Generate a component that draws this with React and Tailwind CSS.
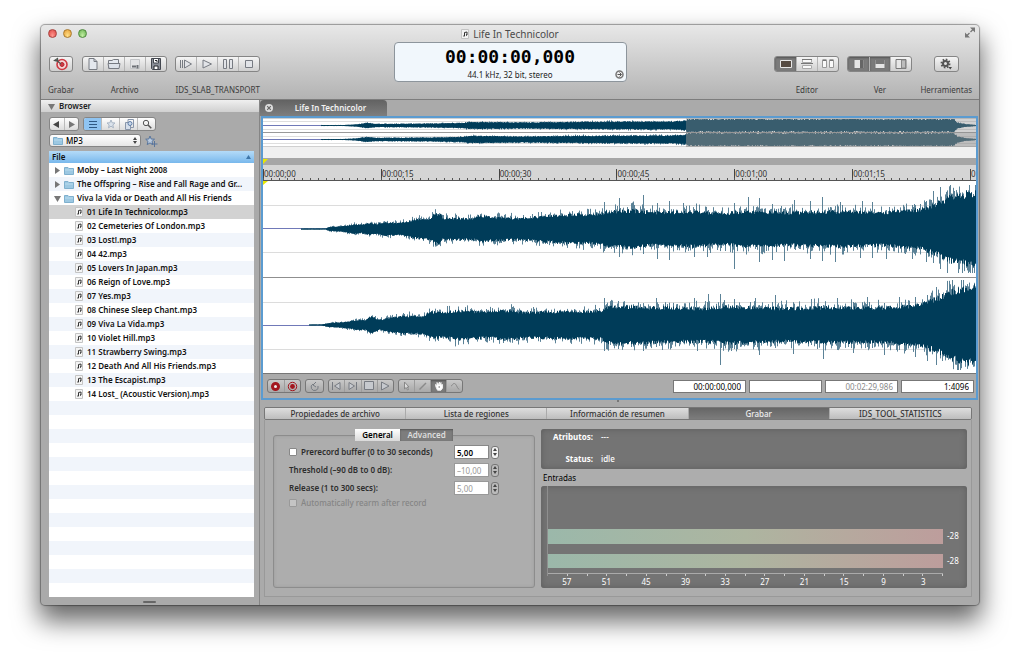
import React, { useState } from 'react';

const FOLDERS = [
    { name: 'Moby – Last Night 2008', open: false },
    { name: 'The Offspring – Rise and Fall Rage and Gr...', open: false },
    { name: 'Viva la Vida or Death and All His Friends', open: true },
];

const TRACKS = [
    '01 Life In Technicolor.mp3',
    '02 Cemeteries Of London.mp3',
    '03 Lost!.mp3',
    '04 42.mp3',
    '05 Lovers In Japan.mp3',
    '06 Reign of Love.mp3',
    '07 Yes.mp3',
    '08 Chinese Sleep Chant.mp3',
    '09 Viva La Vida.mp3',
    '10 Violet Hill.mp3',
    '11 Strawberry Swing.mp3',
    '12 Death And All His Friends.mp3',
    '13 The Escapist.mp3',
    '14 Lost_ (Acoustic Version).mp3',
];

const TIMES = ['00:00;00', '00:00;15', '00:00;30', '00:00;45', '00:01;00', '00:01;15'];
const DB_MARKS = [57, 51, 45, 39, 33, 27, 21, 15, 9, 3];
const PANEL_TABS = ['Propiedades de archivo', 'Lista de regiones', 'Información de resumen', 'Grabar', 'IDS_TOOL_STATISTICS'];

/* ---------- waveform helpers ---------- */

const WIDTH = 713;

const random = (seed) => {
    let s = seed;
    return () => {
        s = (s * 1664525 + 1013904223) % 4294967296;
        return s / 4294967296;
    };
};

// Linear interpolation between [x, height] points
const heightAt = (points, x) => {
    for (let i = 1; i < points.length; i++) {
        const [x0, h0] = points[i - 1];
        const [x1, h1] = points[i];
        if (x <= x1) return h0 + ((h1 - h0) * (x - x0)) / (x1 - x0);
    }
    return points[points.length - 1][1];
};

// Returns the solid body and the thin lighter peaks as two path strings
const buildWave = ({ points, spikes = {}, center, seed, peak, max }) => {
    const rnd = random(seed);
    let body = '';
    let peaks = '';
    for (let x = 0; x < WIDTH; x++) {
        const h = heightAt(points, x);
        if (h < 0.4) continue;
        const up = Math.min(max, h * (0.84 + rnd() * 0.22));
        const down = Math.min(max, h * (0.84 + rnd() * 0.22));
        const extra = (peak * h) / 20;
        const [spikeUp, spikeDown] = spikes[x] || [0, 0];
        const top = Math.min(max, Math.max(spikeUp, up + rnd() ** 3 * extra));
        const bottom = Math.min(max, Math.max(spikeDown, down + rnd() ** 3 * extra));
        body += `M${x + 0.5} ${(center - up).toFixed(1)}V${(center + down).toFixed(1)}`;
        peaks += `M${x + 0.5} ${(center - top).toFixed(1)}V${(center + bottom).toFixed(1)}`;
    }
    return { body, peaks };
};

const LEFT = buildWave({
    points: [[0, 0], [36, 0], [38, 0.6], [62, 0.6], [66, 2], [80, 3], [92, 5], [97, 4], [106, 6], [114, 5], [120, 7], [135, 6], [150, 9], [160, 10], [168, 11], [170, 15], [177, 15], [179, 11], [212, 11], [217, 14], [226, 12], [255, 11], [280, 13], [310, 15], [338, 15], [342, 18], [370, 19], [390, 17], [430, 18], [460, 16], [480, 18], [530, 17], [580, 18], [620, 17], [655, 20], [668, 24], [680, 29], [690, 34], [713, 38]],
    spikes: { 341: [27, 22], 356: [31, 28], 380: [34, 25], 394: [26, 30], 406: [28, 31], 420: [26, 18], 431: [20, 28], 444: [18, 28], 471: [26, 40], 485: [32, 18], 496: [31, 33], 509: [25, 31], 521: [20, 32], 531: [29, 20], 547: [28, 30], 559: [32, 32], 572: [20, 33], 577: [27, 20], 597: [18, 29], 599: [28, 18], 609: [27, 29], 623: [19, 30], 649: [24, 30], 663: [28, 33], 670: [38, 34], 677: [42, 40] },
    center: 48, seed: 7, peak: 9, max: 44,
});

const RIGHT = buildWave({
    points: [[0, 0], [44, 0], [46, 0.6], [58, 0.6], [66, 2], [80, 3], [95, 5], [102, 5], [108, 9], [116, 5], [125, 7], [140, 9], [160, 9], [166, 13], [180, 13], [200, 15], [222, 13], [242, 15], [265, 13], [300, 14], [338, 14], [342, 18], [360, 19], [400, 18], [440, 17], [470, 19], [520, 17], [560, 18], [620, 18], [650, 20], [668, 25], [680, 30], [690, 35], [713, 40]],
    spikes: { 341: [27, 26], 355: [24, 24], 380: [20, 26], 393: [27, 22], 431: [27, 18], 434: [18, 26], 445: [31, 20], 457: [31, 40], 471: [26, 24], 492: [27, 20], 496: [20, 30], 512: [30, 22], 530: [22, 29], 548: [26, 20], 560: [20, 34], 574: [27, 25], 590: [23, 28], 604: [28, 22], 621: [22, 30], 636: [28, 25], 652: [28, 32], 664: [30, 36], 673: [38, 40] },
    center: 144, seed: 31, peak: 9, max: 45,
});

const overviewPoints = [[0, 0], [56, 0], [58, 0.5], [80, 0.5], [92, 1], [104, 2.6], [112, 1.6], [150, 1.8], [170, 2], [200, 2.6], [206, 3.6], [260, 3], [310, 3.6], [380, 4], [408, 4], [422, 4.8], [424, 6.4], [690, 6.4], [694, 3], [702, 1.4], [712, 0.6]];
const OVER_LEFT = buildWave({ points: overviewPoints, center: 7.5, seed: 3, peak: 7, max: 6.5 });
const OVER_RIGHT = buildWave({ points: overviewPoints, center: 21.5, seed: 11, peak: 7, max: 6.5 });

const Overview = () => (
    <svg viewBox="0 0 713 40" preserveAspectRatio="none" className="block h-10 w-full bg-white">
        <rect y="29" width="713" height="11" fill="#f0f0f0" />
        <path d="M0 3.5H713M0 11.5H713M0 18.5H713M0 25.5H713" stroke="#dedede" />
        <path d="M0 14.5H713" stroke="#999" />
        <path d="M0 0.5H713M0 28.5H713" stroke="#d0d0d0" />
        <path d="M0 7.5H713M0 21.5H713" stroke="#7079b8" />
        {[OVER_LEFT, OVER_RIGHT].map((wave, i) => (
            <g key={i} fill="none">
                <path d={wave.peaks} stroke="#5b8297" />
                <path d={wave.body} stroke="#003c59" />
            </g>
        ))}
        <rect x="423" width="290" height="29" fill="#8f8f8f" fillOpacity="0.4" />
        <rect x="423" y="15" width="290" height="14" fill="#8f8f8f" fillOpacity="0.3" />
    </svg>
);

const Waveform = () => (
    <svg viewBox="0 0 713 192" preserveAspectRatio="none" className="block h-48 w-full bg-white">
        <path d="M0 24.5H713M0 71.5H713M0 121.5H713M0 168.5H713" stroke="#dcdcdc" />
        <path d="M0 96.5H713" stroke="#8f8f8f" />
        <path d="M0 47.5H713M0 144.5H713" stroke="#7079b8" />
        {[LEFT, RIGHT].map((wave, i) => (
            <g key={i} fill="none">
                <path d={wave.peaks} stroke="#5b8297" />
                <path d={wave.body} stroke="#003c59" />
            </g>
        ))}
        <path d="M0 0H5L0 4Z" fill="#e8e800" />
    </svg>
);

/* ---------- icons ---------- */

const Icon = ({ w = 12, h = 12, className = '', children }) => (
    <svg width={w} height={h} viewBox={`0 0 ${w} ${h}`} fill="none" stroke="#777b82" className={`shrink-0 ${className}`}>
        {children}
    </svg>
);

const RecordTarget = () => (
    <Icon w={16} h={14}>
        <circle cx="9" cy="7.5" r="5" fill="#f3d7d7" stroke="#cf3a44" strokeWidth="1.6" />
        <circle cx="9" cy="7.5" r="2" fill="#cf3a44" stroke="#b52630" />
        <path d="M3 3L8 7M1.5 3.5L4.5 1.5L5 4.5Z" stroke="#4f5550" strokeWidth="1.2" />
    </Icon>
);

const NewFile = () => (
    <Icon>
        <path d="M2 .5H7L10 3.5V11.5H2Z" fill="#e4e8ee" />
        <path d="M7 .5V3.5H10" />
    </Icon>
);

const OpenFile = () => (
    <Icon w={14}>
        <path d="M1.5 10.5V2.5H5L6.5 1.5H11.5V5" fill="#e4e8ee" />
        <path d="M1 5.5H13L12 10.5H2Z" fill="#dde2e9" />
    </Icon>
);

const SaveFile = () => (
    <Icon>
        <path d="M1.5 1.5H10.5V10.5H1.5Z" fill="#e2e3e5" stroke="#c2c4c7" />
        <path d="M3 8.5H7M8.5 7V10.5" stroke="#6c7076" strokeWidth="2" />
    </Icon>
);

const SaveAs = () => (
    <Icon>
        <path d="M1.5 .5H10.5V11.5H2.5L1.5 10.5Z" fill="#8a8f98" stroke="#43474f" />
        <path d="M3.5 1V5H8.5V1" fill="#fff" stroke="#43474f" />
        <path d="M4 11V8H8V11" fill="#fff" stroke="#22252b" />
        <path d="M5 2.5H7V4" stroke="#22252b" />
    </Icon>
);

const PlayFrom = () => (
    <Icon w={14}>
        <path d="M1.5 2V10M3.5 2V10M5.5 2L12.5 6L5.5 10Z" fill="#e2e4e8" />
    </Icon>
);

const Play = () => (
    <Icon>
        <path d="M2 2L10.5 6L2 10Z" fill="#e2e4e8" />
    </Icon>
);

const Pause = () => (
    <Icon>
        <path d="M1.5 1.5H4.5V10.5H1.5ZM7.5 1.5H10.5V10.5H7.5Z" fill="#e2e4e8" />
    </Icon>
);

const Stop = () => (
    <Icon>
        <path d="M2.5 2.5H9.5V9.5H2.5Z" fill="#e2e4e8" />
    </Icon>
);

const SinglePane = () => (
    <Icon>
        <path d="M.5 2.5H11.5V9.5H.5Z" fill="#564b42" stroke="#e8e8e8" />
    </Icon>
);

const RowsPane = () => (
    <Icon>
        <path d="M1.5 1.5H10.5V4.5H1.5ZM1.5 7.5H10.5V10.5H1.5Z" fill="#fafafa" stroke="#aaa" />
        <path d="M1 1.5H11M0 5.5H12" stroke="#777" />
    </Icon>
);

const ColsPane = () => (
    <Icon>
        <path d="M.5 2.5H4.5V9.5H.5ZM7.5 2.5H11.5V9.5H7.5Z" fill="#fafafa" stroke="#999" />
        <path d="M.5 2H4.5M7.5 2H11.5" stroke="#555" />
    </Icon>
);

const SidePane = ({ side }) => (
    <Icon>
        <path d="M1 1.5H11V10.5H1Z" fill="#e6e6e6" stroke="#777" />
        {side === 'left' && <path d="M7 2H10.5V10H7Z" fill="#666" stroke="none" />}
        {side === 'top' && <path d="M1.5 2H10.5V6H1.5Z" fill="#777" stroke="none" />}
        {side === 'right' && <path d="M6.5 2H10.5V10H6.5Z" fill="#bcbcbc" stroke="#888" />}
    </Icon>
);

const Gear = () => (
    <Icon w={14}>
        <circle cx="6.5" cy="5.5" r="4" stroke="#555" strokeWidth="2" strokeDasharray="1.6 1.5" />
        <circle cx="6.5" cy="5.5" r="2.5" stroke="#555" strokeWidth="2" />
        <path d="M9.5 9H13L11.2 11.5Z" fill="#444" stroke="none" />
    </Icon>
);

const FolderIcon = () => (
    <Icon w={10} h={9}>
        <path d="M.5 1.5H4L5 2.5H9.5V8.5H.5Z" fill="#9cc8e2" stroke="#7fb0ce" />
        <path d="M1 4H9" stroke="#b9dcee" />
    </Icon>
);

const NoteIcon = () => (
    <Icon w={8} h={10}>
        <path d="M.5 .5H7.5V9.5H.5Z" fill="#f4f4f4" stroke="#c4c4c4" />
        <path d="M3.5 7V3.5L6 3V6" stroke="#333" />
        <path d="M2.5 7H3.5M5 6H6" stroke="#333" strokeWidth="1.4" />
    </Icon>
);

const Disclosure = ({ open }) => (
    <Icon w={7} h={7}>
        <path d={open ? 'M0 1H7L3.5 7Z' : 'M1 0L6 3.5L1 7Z'} fill="#777" stroke="none" />
    </Icon>
);

/* ---------- shared controls ---------- */

const Segmented = ({ items, on = [], size = 'big' }) => (
    <div className={`flex divide-x overflow-hidden rounded-[3px] border ${size === 'big' ? 'h-4 divide-[#b4b4b4] border-[#858585] bg-linear-to-b from-[#f5f5f5] to-[#cfcfcf]' : 'h-[14px] divide-[#9c9c9c] border-[#777] bg-linear-to-b from-[#c9c9c9] to-[#a8a8a8]'}`}>
        {items.map(([label, icon], i) => (
            <button
                key={label}
                aria-label={label}
                className={`flex flex-1 items-center justify-center ${on.includes(i) ? 'bg-[#7b7b7b] shadow-[inset_0_1px_2px_#555]' : ''}`}
            >
                {icon}
            </button>
        ))}
    </div>
);

const ToolGroup = ({ label, width, children }) => (
    <div className="flex flex-col items-center gap-3">
        <div className={width}>{children}</div>
        <span className="leading-3 text-[#3c3c3c]">{label}</span>
    </div>
);

const Stepper = ({ label, muted }) => (
    <span className={`flex h-[13px] w-2 flex-col overflow-hidden rounded-[3px] border border-[#777] ${muted ? 'bg-[#bbb]' : 'bg-[#f2f2f2]'}`}>
        <button aria-label={`${label} +`} className="flex flex-1 items-center justify-center">
            <Icon w={4} h={3}><path d="M0 3L2 0L4 3Z" fill="#444" stroke="none" /></Icon>
        </button>
        <button aria-label={`${label} -`} className="flex flex-1 items-center justify-center">
            <Icon w={4} h={3}><path d="M0 0L2 3L4 0Z" fill="#444" stroke="none" /></Icon>
        </button>
    </span>
);

/* ---------- window header ---------- */

const Header = () => (
    <header className="grid h-[75px] grid-cols-[1fr_auto_1fr] rounded-t-[4px] border-b border-[#7d7d7d] bg-linear-to-b from-[#e8e8e8] to-[#b3b3b3]">
        <div className="pt-1 pl-[7px]">
            <div className="flex h-[9px] gap-[6px]">
                <button aria-label="Cerrar" className="size-[9px] rounded-full border border-[#a8433f] bg-radial-[at_50%_80%] from-[#ff9a92] to-[#dc3f3c]" />
                <button aria-label="Minimizar" className="size-[9px] rounded-full border border-[#a87a2e] bg-radial-[at_50%_80%] from-[#ffe08a] to-[#e59a30]" />
                <button aria-label="Ampliar" className="size-[9px] rounded-full border border-[#4f8a3e] bg-radial-[at_50%_80%] from-[#c4f0a4] to-[#63ae4c]" />
            </div>
            <div className="mt-[18px] flex gap-2">
                <ToolGroup label="Grabar" width="w-6">
                    <Segmented items={[['Grabar', <RecordTarget />]]} />
                </ToolGroup>
                <ToolGroup label="Archivo" width="w-[85px]">
                    <Segmented items={[['Nuevo', <NewFile />], ['Abrir', <OpenFile />], ['Guardar', <SaveFile />], ['Guardar como', <SaveAs />]]} />
                </ToolGroup>
                <ToolGroup label="IDS_SLAB_TRANSPORT" width="w-[85px]">
                    <Segmented items={[['Reproducir desde', <PlayFrom />], ['Reproducir', <Play />], ['Pausa', <Pause />], ['Detener', <Stop />]]} />
                </ToolGroup>
            </div>
        </div>

        <div className="flex w-[233px] flex-col items-center pt-[2px]">
            <h1 className="flex h-[14px] items-center gap-1 text-[10px] text-[#4a4a4a]">
                <NoteIcon />
                Life In Technicolor
            </h1>
            <div className="relative mt-px flex h-10 w-full flex-col items-center rounded-[4px] border border-[#8d959c] bg-[#f1f7fc]">
                <span className="mt-1 font-['DejaVu_Sans_Mono',monospace] text-[18px] leading-5 font-bold text-black">00:00:00,000</span>
                <span className="mt-[2px] leading-3 text-[#222]">44.1 kHz, 32 bit, stereo</span>
                <button aria-label="Cambiar formato" className="absolute right-[2px] bottom-[2px]">
                    <Icon w={9} h={9}>
                        <circle cx="4.5" cy="4.5" r="3.5" fill="#eee" stroke="#777" strokeWidth="1.5" />
                        <path d="M2.5 4.5H6M4.5 2.5L6.5 4.5L4.5 6.5" stroke="#555" />
                    </Icon>
                </button>
            </div>
        </div>

        <div className="flex flex-col items-end pt-[2px]">
            <button aria-label="Pantalla completa" className="mr-1">
                <Icon w={10} h={11}>
                    <path d="M5.5 5L9 1.5M4.5 6L1 9.5" stroke="#777" strokeWidth="1.3" />
                    <path d="M5 .5H10V5.5ZM0 5.5V10.5H5Z" fill="#777" stroke="none" />
                </Icon>
            </button>
            <div className="mt-[18px] flex gap-2 pr-[7px]">
                <ToolGroup label="Editor" width="w-[65px]">
                    <Segmented on={[0]} items={[['Un panel', <SinglePane />], ['Filas', <RowsPane />], ['Columnas', <ColsPane />]]} />
                </ToolGroup>
                <ToolGroup label="Ver" width="w-[65px]">
                    <Segmented on={[0, 1]} items={[['Izquierda', <SidePane side="left" />], ['Arriba', <SidePane side="top" />], ['Derecha', <SidePane side="right" />]]} />
                </ToolGroup>
                <ToolGroup label="Herramientas" width="w-[25px]">
                    <Segmented items={[['Herramientas', <Gear />]]} />
                </ToolGroup>
            </div>
        </div>
    </header>
);

/* ---------- file browser ---------- */

const Browser = () => {
    const [selected, setSelected] = useState(TRACKS[0]);

    return (
        <aside className="flex w-[219px] shrink-0 flex-col border-r border-[#858585]">
            <h2 className="flex h-3 items-center gap-1 bg-linear-to-b from-[#f0f0f0] to-[#d0d0d0] pl-[7px] font-semibold text-[#222]">
                <Disclosure open />
                Browser
            </h2>
            <div className="flex flex-1 flex-col pt-[5px] pr-[5px] pb-2 pl-2">
                <div className="flex h-[14px] gap-1">
                    <div className="flex w-[30px] divide-x divide-[#bbb] rounded-[3px] border border-[#858585] bg-linear-to-b from-white to-[#dcdcdc]">
                        <button aria-label="Atrás" className="flex flex-1 items-center justify-center">
                            <Icon w={7} h={7}><path d="M6 0V7L0 3.5Z" fill="#444" stroke="none" /></Icon>
                        </button>
                        <button aria-label="Adelante" className="flex flex-1 items-center justify-center">
                            <Icon w={7} h={7}><path d="M1 0V7L7 3.5Z" fill="#777" stroke="none" /></Icon>
                        </button>
                    </div>
                    <div className="flex w-[73px] divide-x divide-[#bbb] overflow-hidden rounded-[3px] border border-[#858585] bg-linear-to-b from-white to-[#dcdcdc]">
                        <button aria-label="Lista" className="flex flex-1 items-center justify-center bg-[#8fc4f2]">
                            <Icon w={10} h={9}><path d="M1 1.5H9M1 4.5H9M1 7.5H9" stroke="#2f5a85" /></Icon>
                        </button>
                        <button aria-label="Favoritos" className="flex flex-1 items-center justify-center">
                            <Icon w={10} h={10}><path d="M5 1L6.2 3.8L9 4L6.8 5.9L7.5 8.8L5 7.2L2.5 8.8L3.2 5.9L1 4L3.8 3.8Z" fill="#dbe3ec" stroke="#a9b5c4" /></Icon>
                        </button>
                        <button aria-label="Recientes" className="flex flex-1 items-center justify-center">
                            <Icon w={10} h={11}>
                                <path d="M1.5 3.5H6.5V10.5H1.5Z" fill="#d5deea" stroke="#8996aa" />
                                <path d="M4 3V.5H9.5V8.5H7" stroke="#8996aa" />
                                <circle cx="6" cy="4.5" r="2" fill="#c9d8ea" stroke="#627fa8" />
                            </Icon>
                        </button>
                        <button aria-label="Buscar" className="flex flex-1 items-center justify-center">
                            <Icon w={10} h={10}>
                                <circle cx="4" cy="4" r="2.7" stroke="#555" />
                                <path d="M6 6L9.3 9.3" stroke="#555" strokeWidth="1.5" />
                            </Icon>
                        </button>
                    </div>
                </div>

                <div className="mt-[3px] flex items-center gap-1">
                    <div className="relative w-[92px]">
                        <select aria-label="Carpeta" className="block h-[13px] w-full appearance-none rounded-[3px] border border-[#858585] bg-linear-to-b from-white to-[#e6e6e6] pl-4 leading-[11px] font-medium text-black">
                            <option>MP3</option>
                        </select>
                        <span className="pointer-events-none absolute inset-y-0 left-1 flex items-center"><FolderIcon /></span>
                        <span className="pointer-events-none absolute inset-y-0 right-1 flex items-center">
                            <Icon w={4} h={7}><path d="M0 3L2 0L4 3ZM0 4L2 7L4 4Z" fill="#444" stroke="none" /></Icon>
                        </span>
                    </div>
                    <button aria-label="Añadir a favoritos">
                        <Icon w={13} h={12}>
                            <path d="M5 1L6.2 4L9.5 4.2L7 6.4L7.8 9.6L5 7.9L2.2 9.6L3 6.4L.7 4.2L3.8 4Z" fill="#b9cadf" stroke="#58759c" />
                            <path d="M9.5 6V12M6.5 9H12.5" stroke="#58759c" />
                        </Icon>
                    </button>
                </div>

                <div className="mt-1 flex-1 bg-[repeating-linear-gradient(#fff_0_14px,#f1f5fb_14px_28px)] bg-[position:0_12px] bg-white">
                    <table className="w-full table-fixed border-collapse text-[#111]">
                        <thead>
                            <tr className="h-3 bg-linear-to-b from-[#b4dbf8] to-[#78b8ec]">
                                <th className="p-0 text-left font-semibold">
                                    <button className="flex h-3 w-full items-center justify-between px-[3px]">
                                        File
                                        <Icon w={5} h={4}><path d="M0 4L2.5 0L5 4Z" fill="#3f76a8" stroke="none" /></Icon>
                                    </button>
                                </th>
                            </tr>
                        </thead>
                        <tbody className="font-semibold">
                            {FOLDERS.map((folder) => (
                                <tr key={folder.name}>
                                    <td className="h-[14px] p-0">
                                        <button className="flex h-[14px] w-full items-center gap-[3px] pl-[5px] whitespace-nowrap">
                                            <Disclosure open={folder.open} />
                                            <FolderIcon />
                                            <span>{folder.name}</span>
                                        </button>
                                    </td>
                                </tr>
                            ))}
                            {TRACKS.map((track) => (
                                <tr key={track} className={track === selected ? 'bg-[#d2d2d2]' : ''}>
                                    <td className="h-[14px] p-0">
                                        <button onClick={() => setSelected(track)} className="flex h-[14px] w-full items-center gap-1 pl-[26px] whitespace-nowrap">
                                            <NoteIcon />
                                            <span>{track}</span>
                                        </button>
                                    </td>
                                </tr>
                            ))}
                        </tbody>
                    </table>
                </div>
            </div>
            <i className="-mt-1 mb-[2px] ml-[102px] h-[2px] w-[13px] rounded-full bg-[#666]" />
        </aside>
    );
};

/* ---------- editor ---------- */

const Ruler = () => (
    <div className="flex h-4 border-b border-[#555] bg-[#d5d5d5]">
        {TIMES.map((time) => (
            <div key={time} className="flex flex-1 flex-col justify-end">
                <span className="border-l border-[#444] leading-[9px] text-[#333]">{time}</span>
                <div className="flex h-[2px]">
                    {Array.from({ length: 15 }, (_, i) => (
                        <i key={i} className="flex-1 border-l border-[#555]" />
                    ))}
                </div>
            </div>
        ))}
        <div className="flex w-[6px] flex-col justify-end">
            <span className="border-l border-[#444] leading-[9px] text-[#333]">0</span>
            <i className="h-[2px] border-l border-[#555]" />
        </div>
    </div>
);

const READOUTS = [
    ['Posición', '00:00:00,000', 'text-black'],
    ['Selección', '', 'text-black'],
    ['Duración', '00:02:29,986', 'text-[#8a8a8a]'],
    ['Zoom', '1:4096', 'text-black'],
];

const EditorBar = () => (
    <div className="flex h-[25px] items-center gap-1 border-t border-[#777] bg-[#ababab] pr-[2px] pl-1">
        <div className="w-[34px]">
            <Segmented
                size="small"
                items={[
                    ['Grabar', <Icon w={11} h={11}><circle cx="5.5" cy="5.5" r="3" fill="#eee" stroke="#a3161e" strokeWidth="3" /></Icon>],
                    ['Grabar región', <Icon w={11} h={11}><circle cx="5.5" cy="5.5" r="4.2" stroke="#a3161e" /><circle cx="5.5" cy="5.5" r="2.4" fill="#a3161e" stroke="none" /></Icon>],
                ]}
            />
        </div>
        <div className="w-[19px]">
            <Segmented size="small" items={[['Bucle', <Icon w={10} h={10}><path d="M6 1L3 4L6 6M3 3A3.5 3.5 0 1 0 8 5" stroke="#767b82" /></Icon>]]} />
        </div>
        <div className="w-[66px]">
            <Segmented
                size="small"
                items={[
                    ['Inicio', <Icon w={11} h={10}><path d="M1.5 1V9M9 1.5V8.5L3.5 5Z" fill="#c6c9ce" /></Icon>],
                    ['Fin', <Icon w={11} h={10}><path d="M9.5 1V9M2 1.5V8.5L7.5 5Z" fill="#c6c9ce" /></Icon>],
                    ['Detener', <Icon w={10} h={10}><path d="M.5 .5H9.5V8.5H.5Z" fill="#c6c9ce" /></Icon>],
                    ['Reproducir', <Icon w={10} h={10}><path d="M1.5 1V9L9 5Z" fill="#c6c9ce" /></Icon>],
                ]}
            />
        </div>
        <div className="w-[65px]">
            <Segmented
                size="small"
                on={[2]}
                items={[
                    ['Selección', <Icon w={9} h={10}><path d="M2.5 1V8L4.2 6.5L5.5 9L6.5 8.5L5.3 6H7Z" fill="#ddd" stroke="#888" /></Icon>],
                    ['Lápiz', <Icon w={9} h={10}><path d="M1.5 8.5L8 2" stroke="#8a8a8a" strokeWidth="1.5" /></Icon>],
                    ['Mano', <Icon w={10} h={10}><path d="M2 6L1.5 3.5L3 4.5V1.5L4.5 3.5L5.5 1V3.5L7 1.5V4L8.5 3.5V7L7 9.2H3.5Z" fill="#fff" stroke="#eee" /><path d="M4.5 6H6" stroke="#666" /></Icon>],
                    ['Curva', <Icon w={10} h={10}><path d="M1 5C2.5 5 2.5 2 4.5 2.5C6.5 3 6.5 6 9 8.5" stroke="#888" /></Icon>],
                ]}
            />
        </div>
        <div className="ml-auto flex gap-[3px]">
            {READOUTS.map(([label, value, color]) => (
                <input key={label} aria-label={label} defaultValue={value} className={`h-[13px] w-[73px] border border-[#777] bg-white px-1 text-right ${color}`} />
            ))}
        </div>
    </div>
);

const Editor = () => (
    <div>
        <div className="flex h-4 items-start bg-[#aaa]">
            <div className="flex h-4 w-[127px] items-center rounded-t-[4px] bg-linear-to-b from-[#626262] to-[#7e7e7e] pl-1">
                <button aria-label="Cerrar pestaña">
                    <Icon w={10} h={10}>
                        <circle cx="5" cy="5" r="4" fill="#ddd" stroke="none" />
                        <path d="M3.2 3.2L6.8 6.8M6.8 3.2L3.2 6.8" stroke="#666" strokeWidth="1.2" />
                    </Icon>
                </button>
                <span className="flex-1 text-center font-semibold text-[#f2f2f2]">Life In Technicolor</span>
            </div>
        </div>
        <div className="mx-px border-2 border-[#5b9bd0]">
            <Overview />
            <div className="h-[7px] bg-[#a6a6a6]">
                <Icon w={5} h={6} className="block"><path d="M0 1H5L0 6Z" fill="#e8e800" stroke="none" /></Icon>
            </div>
            <Ruler />
            <Waveform />
            <EditorBar />
        </div>
    </div>
);

/* ---------- bottom panel ---------- */

const RecordOptions = () => {
    const [tab, setTab] = useState('Advanced');

    return (
        <fieldset className="min-w-0 rounded-[3px] border border-[#8c8c8c] px-[15px] pb-2 shadow-[inset_0_0_3px_#999]">
            <legend className="mx-auto flex h-3 w-[98px]">
                {['General', 'Advanced'].map((name) => (
                    <button
                        key={name}
                        onClick={() => setTab(name)}
                        className={`flex-auto leading-3 font-semibold ${name === tab ? 'bg-[#7d7d7d] text-[#ddd] shadow-[inset_0_1px_2px_#555]' : 'bg-linear-to-b from-white to-[#dadada] text-black'}`}
                    >
                        {name}
                    </button>
                ))}
            </legend>
            <div className="mt-1 grid grid-cols-[163px_35px_auto] items-center justify-start gap-x-[2px] gap-y-1 font-semibold text-[#2c2c2c]">
                <label className="flex items-center gap-1 whitespace-nowrap">
                    <input type="checkbox" className="size-2 appearance-none rounded-[1px] border border-[#888] bg-white checked:bg-[#3b78b8]" />
                    Prerecord buffer (0 to 30 seconds)
                </label>
                <input aria-label="Prerecord buffer" defaultValue="5,00" className="h-[14px] w-full border border-[#888] bg-white px-[2px] text-black" />
                <Stepper label="Prerecord buffer" />

                <label htmlFor="threshold">Threshold (–90 dB to 0 dB):</label>
                <input id="threshold" disabled defaultValue="–10,00" className="h-[14px] w-full border border-[#999] bg-white px-[2px] font-normal text-[#999]" />
                <Stepper label="Threshold" muted />

                <label htmlFor="release">Release (1 to 300 secs):</label>
                <input id="release" disabled defaultValue="5,00" className="h-[14px] w-full border border-[#999] bg-white px-[2px] font-normal text-[#999]" />
                <Stepper label="Release" muted />
            </div>
            <label className="mt-[2px] flex items-center gap-1 leading-3 font-medium text-[#858585]">
                <input type="checkbox" disabled className="size-2 appearance-none rounded-[1px] border border-[#999] bg-[#c4c4c4]" />
                Automatically rearm after record
            </label>
        </fieldset>
    );
};

const LevelBar = () => (
    <div className="flex h-[15px] items-center gap-1">
        <div className="h-full flex-1 bg-linear-to-r from-[#9bb8aa] via-[#adb5a0] to-[#bd9d9c]" />
        <span className="w-5 text-white">-28</span>
    </div>
);

const InputLevels = () => (
    <div>
        <dl className="grid h-10 grid-cols-[44px_auto] content-between justify-start gap-x-2 rounded-[3px] bg-[#747474] pt-[2px] pb-1 pl-2 text-right leading-3 text-white shadow-[inset_0_0_6px_#5c5c5c]">
            <dt className="font-bold">Atributos:</dt>
            <dd className="text-left font-medium">---</dd>
            <dt className="font-bold">Status:</dt>
            <dd className="text-left font-medium">idle</dd>
        </dl>
        <h3 className="mt-[3px] pl-[2px] leading-3 text-black">Entradas</h3>
        <div className="mt-[2px] h-[102px] rounded-[3px] bg-[#747474] pl-[6px] shadow-[inset_0_0_6px_#5c5c5c]">
            <div className="flex h-[90px] flex-col gap-[10px] border-l border-[#8f8f8f] pt-[43px]">
                <LevelBar />
                <LevelBar />
                <div className="-mt-[5px] mr-6 grid h-[3px] grid-cols-20 border-t border-[#aaa]">
                    {Array.from({ length: 20 }, (_, i) => (
                        <i key={i} className="ml-auto h-[2px] w-px bg-[#ccc]" />
                    ))}
                </div>
            </div>
            <div className="mr-6 grid grid-cols-10 text-center leading-3 text-white">
                {DB_MARKS.map((db) => <span key={db}>{db}</span>)}
            </div>
        </div>
    </div>
);

const BottomPanel = () => {
    const [active, setActive] = useState('Grabar');

    return (
        <section className="flex-1 pr-[7px] pb-2 pl-1">
            <div className="flex h-[7px] items-start justify-center">
                <i className="size-[2px] rounded-full bg-[#666]" />
            </div>
            <div className="grid h-[13px] grid-cols-5 divide-x divide-[#aaa] overflow-hidden rounded-[2px] border border-[#777]">
                {PANEL_TABS.map((name) => (
                    <button
                        key={name}
                        onClick={() => setActive(name)}
                        className={`leading-[11px] font-medium ${name === active ? 'bg-linear-to-b from-[#666] to-[#7c7c7c] text-[#eee]' : 'bg-linear-to-b from-[#dedede] to-[#bdbdbd] text-[#333]'}`}
                    >
                        {name}
                    </button>
                ))}
            </div>
            <div className="grid grid-cols-[262px_1fr] gap-[6px] border border-t-0 border-[#999] bg-[#adadad] pt-[9px] pr-1 pb-2 pl-2">
                <RecordOptions />
                <InputLevels />
            </div>
        </section>
    );
};

const App = () => (
    <div className="bg-white px-[41px] pt-[25px] pb-[57px] font-['Noto_Sans','Open_Sans',sans-serif] text-[8px]">
        <main className="rounded-[4px] bg-[#aaa] shadow-[0_0_1px_1px_rgba(0,0,0,0.35),0_14px_26px_2px_rgba(0,0,0,0.6)]">
            <Header />
            <div className="flex">
                <Browser />
                <div className="flex min-w-0 flex-1 flex-col">
                    <Editor />
                    <BottomPanel />
                </div>
            </div>
        </main>
    </div>
);

export default App;
